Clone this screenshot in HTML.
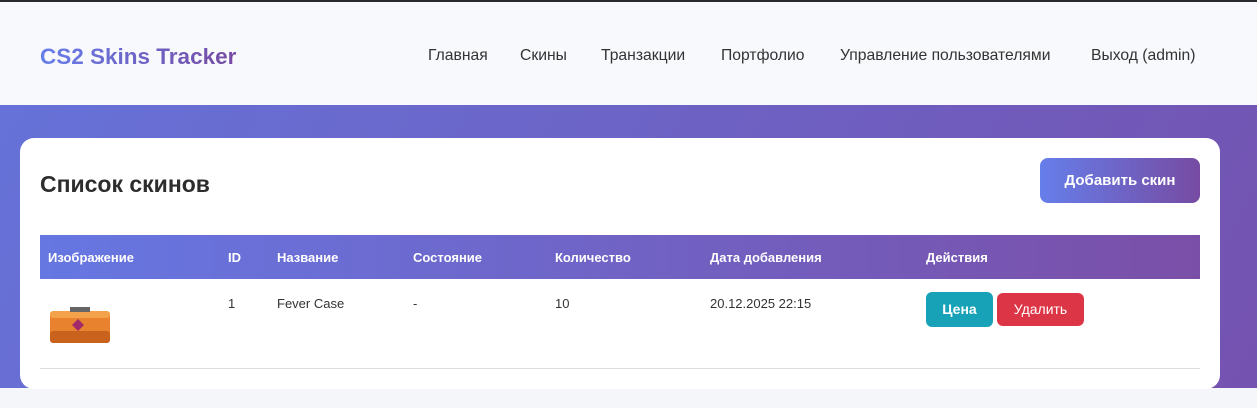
<!DOCTYPE html>
<html><head><meta charset="utf-8"><style>
*{margin:0;padding:0;box-sizing:border-box}
body{width:1257px;height:408px;overflow:hidden;background:#f5f6fa;font-family:"Liberation Sans","DejaVu Sans",sans-serif;position:relative}
.top{position:absolute;left:0;top:0;width:1257px;height:2px;background:#2a2a2e}
.hdr{position:absolute;left:0;top:2px;width:1257px;height:103px;background:#f8f9fc}
.logo{position:absolute;left:40px;top:42px;font-size:22.5px;font-weight:bold;background:linear-gradient(90deg,#667eea,#764ba2);-webkit-background-clip:text;color:transparent}
.nav{position:absolute;top:45px;font-size:15.7px;color:#333}
.band{position:absolute;left:0;top:105px;width:1257px;height:283px;background:linear-gradient(120deg,#6672d8,#7452b0)}
.card{position:absolute;left:20px;top:138px;width:1200px;height:251px;background:#fff;border-radius:14px}
h2{position:absolute;left:20px;top:33px;font-size:23px;color:#2d2d2d}
.add{position:absolute;left:1020px;top:20px;width:160px;height:45px;border-radius:8px;background:linear-gradient(90deg,#667eea,#764ba2);color:#fff;font-weight:bold;font-size:15px;text-align:center;line-height:45px}
.th{position:absolute;left:20px;top:97px;width:1160px;height:44px;background:linear-gradient(90deg,#6677e2,#7a4fa8)}
.th span{position:absolute;top:15px;color:#fff;font-weight:bold;font-size:13px}
.td{position:absolute;top:158px;font-size:13px;color:#333}
.line{position:absolute;left:20px;top:230px;width:1160px;height:1px;background:#ddd}
.btn{position:absolute;top:154px;height:35px;border-radius:6px;color:#fff;font-size:14px;text-align:center;line-height:35px}
</style></head><body>
<div class="top"></div>
<div class="hdr">
<div class="logo">CS2 Skins Tracker</div>
<span class="nav" style="left:428px">Главная</span>
<span class="nav" style="left:520px">Скины</span>
<span class="nav" style="left:601px">Транзакции</span>
<span class="nav" style="left:721px">Портфолио</span>
<span class="nav" style="left:840px">Управление пользователями</span>
<span class="nav" style="left:1091px">Выход (admin)</span>
</div>
<div class="band"></div>
<div class="card">
<h2>Список скинов</h2>
<div class="add">Добавить скин</div>
<div class="th">
<span style="left:8px">Изображение</span>
<span style="left:188px">ID</span>
<span style="left:237px">Название</span>
<span style="left:373px">Состояние</span>
<span style="left:515px">Количество</span>
<span style="left:670px">Дата добавления</span>
<span style="left:886px">Действия</span>
</div>
<svg style="position:absolute;left:28px;top:163px" width="64" height="46" viewBox="0 0 64 46">
<rect x="2" y="10" width="60" height="32" rx="4" fill="#e8822e"/>
<rect x="2" y="10" width="60" height="7" rx="3" fill="#f3a14a"/>
<rect x="22" y="6" width="20" height="5" fill="#666"/>
<rect x="2" y="30" width="60" height="12" rx="3" fill="#c9621c"/>
<polygon points="24,24 30,18 36,24 30,30" fill="#a02a6a"/>
</svg>
<div class="td" style="left:208px">1</div>
<div class="td" style="left:257px">Fever Case</div>
<div class="td" style="left:393px">-</div>
<div class="td" style="left:535px">10</div>
<div class="td" style="left:690px">20.12.2025 22:15</div>
<div class="btn" style="left:906px;width:67px;background:#17a2b8;font-weight:bold">Цена</div>
<div class="btn" style="left:977px;width:87px;background:#dc3545;top:155px;height:33px;line-height:33px">Удалить</div>
<div class="line"></div>
</div>
</body></html>
